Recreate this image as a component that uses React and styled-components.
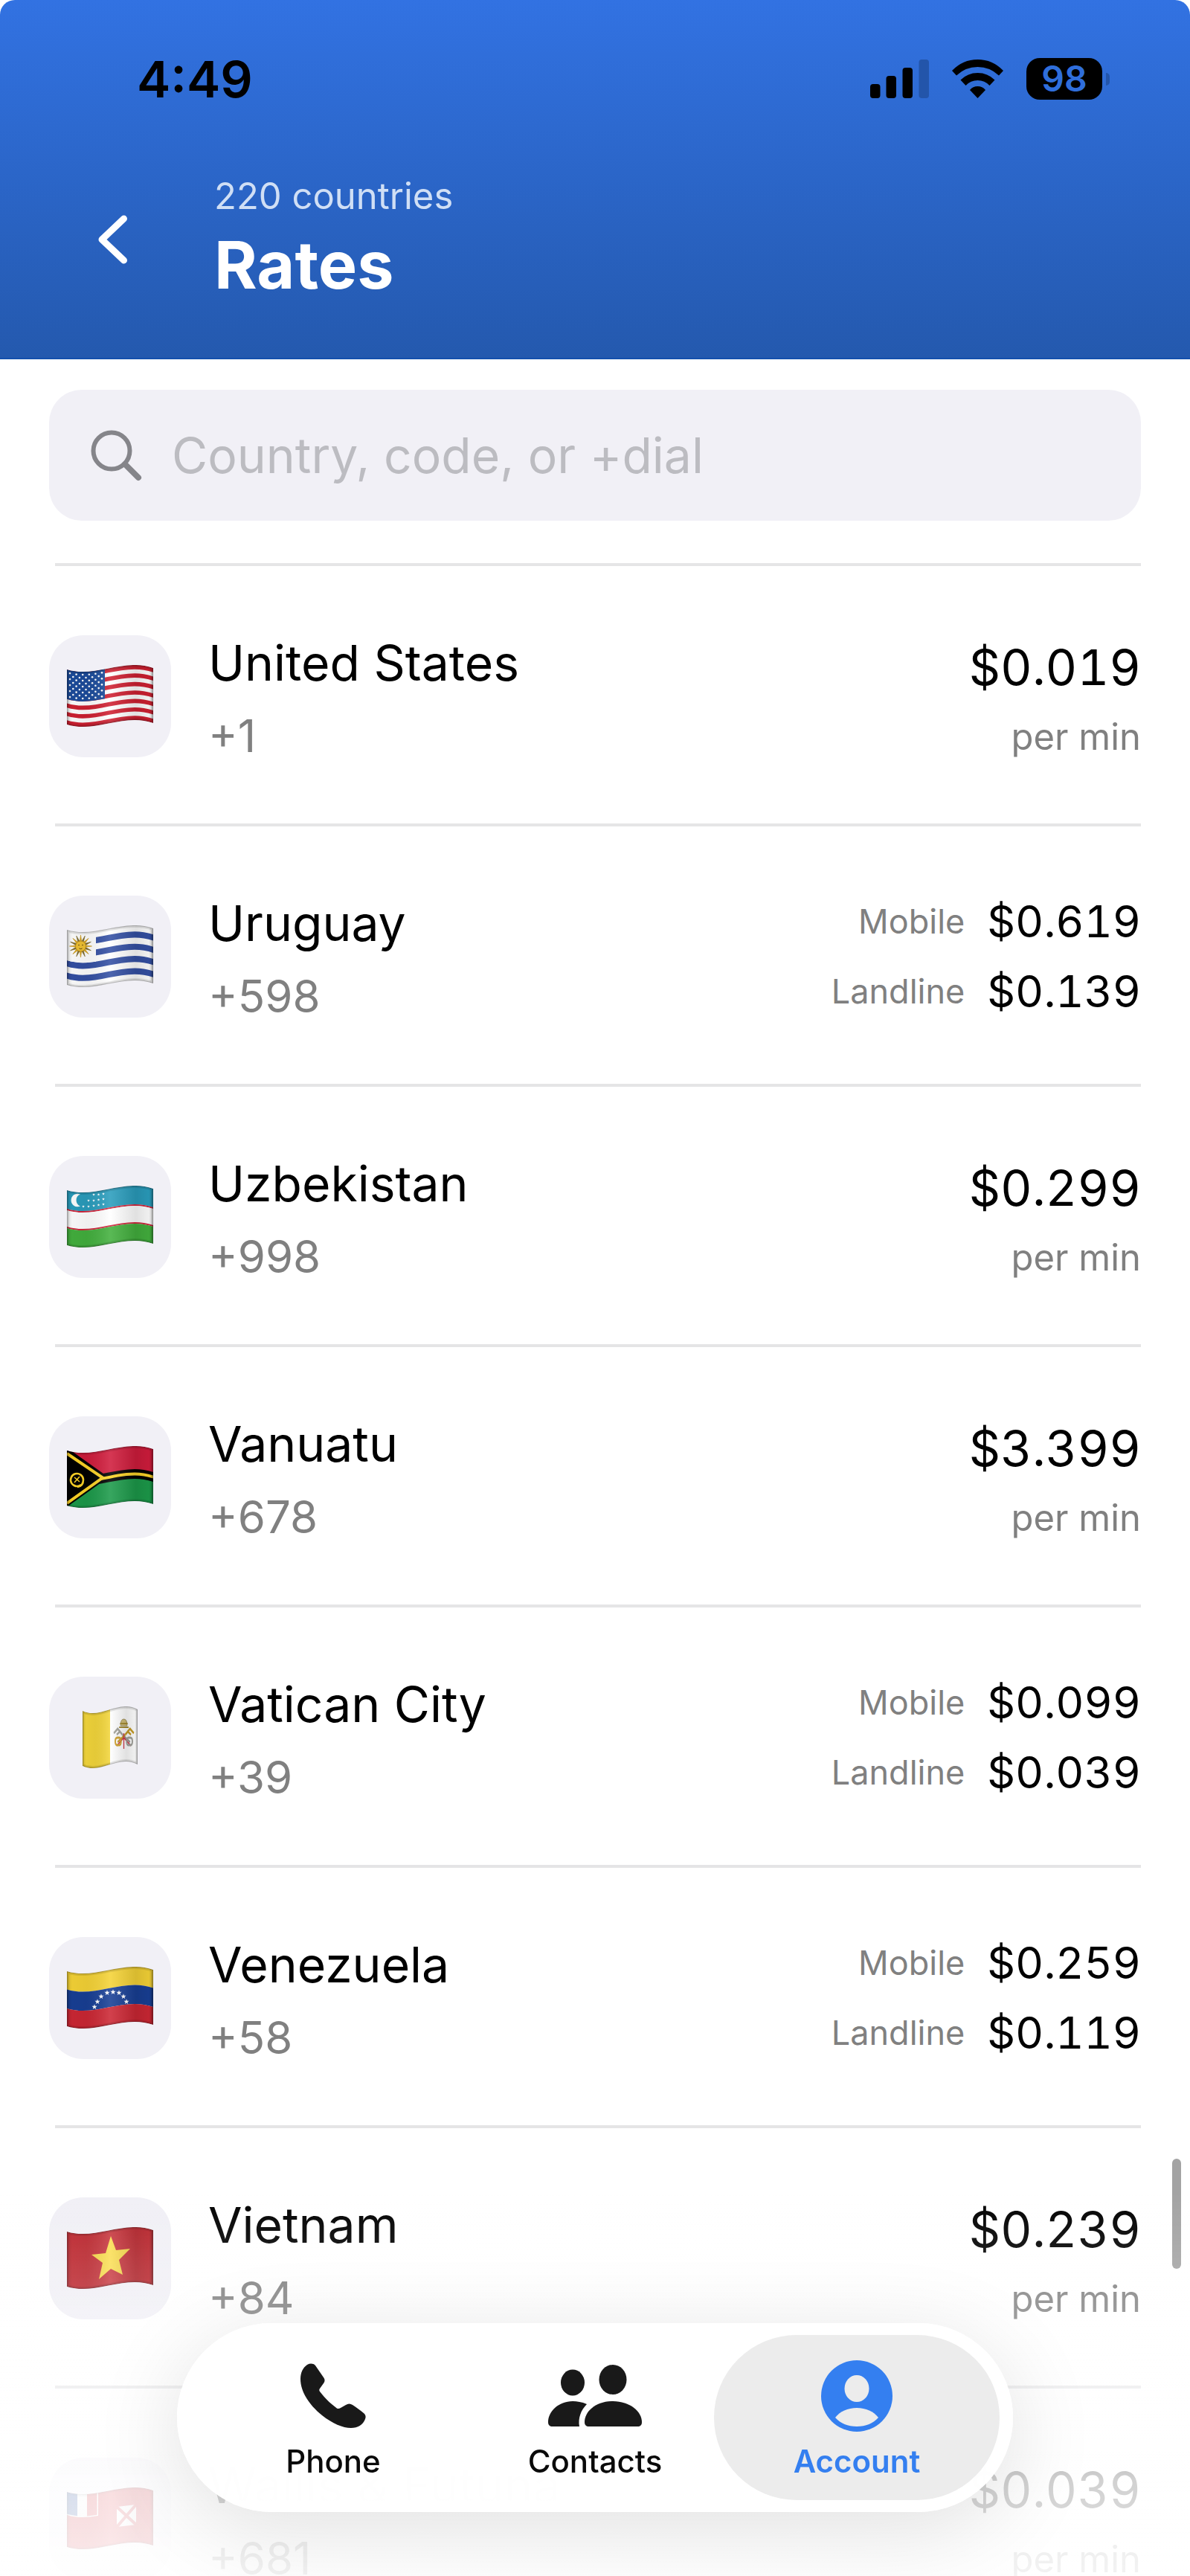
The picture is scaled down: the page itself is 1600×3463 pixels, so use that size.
import React, { useState } from 'react';
import styled, { createGlobalStyle, css } from 'styled-components';

const GlobalStyle = createGlobalStyle`
  * {
    box-sizing: border-box;
  }

  body {
    margin: 0;
    background: #fff;
    color: #000;
    font-family: Inter, 'Liberation Sans', sans-serif;
  }
`;

const Screen = styled.div`
  position: relative;
  display: flex;
  flex-direction: column;
  height: 100vh;
  overflow: hidden;
`;

const Header = styled.header`
  flex: none;
  border-radius: 20px 20px 0 0;
  border-bottom: 2px solid #1450ad;
  background: linear-gradient(#3272e2, #2459ae);
`;

const StatusBar = styled.div`
  display: flex;
  align-items: center;
  justify-content: space-between;
  padding: 66px 118px 0 184px;
`;

const Clock = styled.time`
  font-size: 68px;
  line-height: 80px;
  font-weight: 600;
`;

const StatusIcons = styled.div`
  display: flex;
  align-items: center;
  gap: 31px;
`;

const Battery = styled.div`
  position: relative;
  width: 102px;
  height: 56px;
  border-radius: 18px;
  background: #000;
  color: #2f6edb;
  font-size: 48px;
  line-height: 56px;
  font-weight: 600;
  text-align: center;

  &::after {
    content: '';
    position: absolute;
    top: 20px;
    right: -10px;
    width: 5px;
    height: 17px;
    border-radius: 0 5px 5px 0;
    background: #2355aa;
  }
`;

const TitleBar = styled.div`
  display: flex;
  align-items: center;
  gap: 116px;
  padding: 84px 66px 67px 132px;
`;

const BackButton = styled.button`
  display: flex;
  padding: 0;
  border: 0;
  background: none;
  color: #fff;
  cursor: pointer;
`;

const Subtitle = styled.p`
  margin: 0;
  color: #d0dff5;
  font-size: 49px;
  line-height: 68px;
`;

const Title = styled.h1`
  margin: 0;
  color: #fff;
  font-size: 88px;
  line-height: 116px;
  font-weight: 700;
`;

const SearchField = styled.label`
  display: flex;
  flex: none;
  align-items: center;
  gap: 40px;
  height: 176px;
  margin: 41px 66px 57px;
  padding: 0 56px;
  border-radius: 44px;
  background: #f1f0f6;
  color: #85858a;
`;

const SearchInput = styled.input`
  flex: 1;
  min-width: 0;
  padding: 0;
  border: 0;
  outline: 0;
  background: none;
  color: #000;
  font: inherit;
  font-size: 66px;

  &::placeholder {
    color: #bcbcc1;
    opacity: 1;
  }
`;

const RateList = styled.ul`
  flex: 1;
  min-height: 0;
  margin: 0;
  padding: 0 66px;
  overflow-y: auto;
  scrollbar-width: none;
  list-style: none;
`;

const RateRow = styled.li`
  display: flex;
  flex-direction: column;

  &::before {
    content: '';
    height: 4px;
    margin-left: 8px;
    background: #e5e5e6;
  }
`;

const RateBody = styled.div`
  display: flex;
  align-items: center;
  gap: 50px;
  height: 346px;
  padding-top: 4px;
`;

const FlagTile = styled.div`
  display: flex;
  flex: none;
  align-items: center;
  justify-content: center;
  width: 164px;
  height: 164px;
  border-radius: 46px;
  background: #f1f0f6;
`;

const Country = styled.div`
  flex: 1;
  min-width: 0;
  padding-top: 8px;
`;

const CountryName = styled.div`
  font-size: 66px;
  line-height: 98px;
`;

const DialCode = styled.div`
  color: #808080;
  font-size: 60px;
  line-height: 98px;
`;

const Prices = styled.div`
  display: flex;
  flex-direction: column;
  align-items: flex-end;
  padding-top: ${({ $flat }) => ($flat ? '16px' : '0')};
`;

const PriceLine = styled.div`
  display: flex;
  align-items: center;
  gap: 30px;
  line-height: 94px;
`;

const Price = styled.span`
  font-size: ${({ $small }) => ($small ? '59px' : '66px')};
  font-variant-numeric: tabular-nums;
`;

const PriceNote = styled.span`
  color: #808080;
  font-size: ${({ $small }) => ($small ? '45px' : '49px')};
`;

const ScrollThumb = styled.div`
  position: absolute;
  top: 2902px;
  right: 12px;
  width: 12px;
  height: 148px;
  border-radius: 6px;
  background: #a3a3a3;
`;

const BottomFade = styled.div`
  position: fixed;
  right: 0;
  bottom: 0;
  left: 0;
  height: 520px;
  background: linear-gradient(
    rgba(255, 255, 255, 0),
    rgba(255, 255, 255, 0.2) 30%,
    rgba(255, 255, 255, 0.45) 50%,
    rgba(255, 255, 255, 0.82) 75%,
    rgba(255, 255, 255, 0.9)
  );
  pointer-events: none;
`;

const TabBar = styled.nav`
  position: fixed;
  bottom: 86px;
  left: 50%;
  display: flex;
  padding: 16px 18px;
  border-radius: 127px;
  background: rgba(255, 255, 255, 0.98);
  box-shadow: 0 24px 120px rgba(0, 0, 0, 0.12);
  transform: translateX(-50%);
`;

const Tab = styled.button`
  display: flex;
  flex-direction: column;
  align-items: center;
  width: 384px;
  height: 222px;
  padding: 34px 0 0;
  border: 0;
  border-radius: 111px;
  background: none;
  color: #0a0a0a;
  font: inherit;
  font-size: 42px;
  line-height: 48px;
  font-weight: 500;
  cursor: pointer;

  & + & {
    margin-left: -32px;
  }

  svg {
    margin-bottom: 16px;
  }

  ${({ $active }) =>
    $active &&
    css`
      background: #ececec;
      color: #347ff0;
      font-weight: 600;
    `}
`;

// Height of the cloth's upper edge at a given x, for a flag 116 wide.
const waveY = (x) => {
  const t = x / 116;
  const u = 1 - t;
  return 6 * u ** 3 + 54 * u * u * t - 30 * u * t * t + 4 * t ** 3;
};

const band = (from, to) =>
  `M0 ${6 + from}C38 ${18 + from} 76 ${from - 10} 116 ${4 + from}V${4 + to}` +
  `C76 ${to - 10} 38 ${18 + to} 0 ${6 + to}Z`;

const starPoints = (cx, cy, r) =>
  Array.from({ length: 10 }, (_, i) => {
    const radius = i % 2 ? r * 0.4 : r;
    const angle = (Math.PI / 5) * i - Math.PI / 2;
    return `${cx + radius * Math.cos(angle)},${cy + radius * Math.sin(angle)}`;
  }).join(' ');

const Flag = ({ id, narrow, children }) => (
  <svg
    width={narrow ? 74 : 116}
    height="84"
    viewBox="0 0 116 84"
    preserveAspectRatio="none"
    aria-hidden="true"
  >
    <defs>
      <clipPath id={`${id}-cloth`}>
        <path d={band(0, 74)} />
      </clipPath>
      <linearGradient id={`${id}-shade`}>
        <stop offset="0" stopColor="#000" stopOpacity="0.16" />
        <stop offset="0.06" stopColor="#000" stopOpacity="0.04" />
        <stop offset="0.22" stopColor="#000" stopOpacity="0.06" />
        <stop offset="0.5" stopColor="#fff" stopOpacity="0.12" />
        <stop offset="0.8" stopColor="#000" stopOpacity="0.12" />
        <stop offset="0.95" stopColor="#000" stopOpacity="0.06" />
        <stop offset="1" stopColor="#000" stopOpacity="0.24" />
      </linearGradient>
    </defs>
    <g clipPath={`url(#${id}-cloth)`}>
      {children}
      <path d={band(0, 74)} fill={`url(#${id}-shade)`} />
      <path d={band(0, 74)} fill="none" stroke="#000" strokeOpacity="0.1" strokeWidth="6" />
      <path d={band(0, 74)} fill="none" stroke="#000" strokeOpacity="0.2" strokeWidth="2" />
    </g>
  </svg>
);

const UnitedStatesFlag = () => {
  const stripe = 74 / 13;
  const stars = [];
  for (let row = 0; row < 9; row += 1) {
    for (let col = 0; col < (row % 2 ? 5 : 6); col += 1) {
      const x = 4 + col * 8.6 + (row % 2 ? 4.3 : 0);
      stars.push(<circle key={`${row}-${col}`} cx={x} cy={waveY(x) + 4 + row * 4} r="1.3" />);
    }
  }
  return (
    <Flag id="us">
      <path d={band(0, 74)} fill="#fff" />
      {[0, 2, 4, 6, 8, 10, 12].map((n) => (
        <path key={n} d={band(n * stripe, (n + 1) * stripe)} fill="#cf2031" />
      ))}
      <clipPath id="us-canton">
        <rect width="51" height="84" />
      </clipPath>
      <path d={band(0, 7 * stripe)} fill="#1c4c9c" clipPath="url(#us-canton)" />
      <g fill="#fff">{stars}</g>
    </Flag>
  );
};

const UruguayFlag = () => {
  const stripe = 74 / 9;
  return (
    <Flag id="uy">
      <path d={band(0, 74)} fill="#fff" />
      {[1, 3, 5, 7].map((n) => (
        <path key={n} d={band(n * stripe, (n + 1) * stripe)} fill="#3450a4" />
      ))}
      <clipPath id="uy-canton">
        <rect width="39" height="84" />
      </clipPath>
      <path d={band(0, 5 * stripe)} fill="#fff" clipPath="url(#uy-canton)" />
      {Array.from({ length: 16 }, (_, i) => (
        <path
          key={i}
          d="M17.2 22L18.5 13L19.8 22Z"
          fill={i % 2 ? '#7d6a2c' : '#e0ac1e'}
          stroke={i % 2 ? '#7d6a2c' : '#c4941b'}
          strokeWidth="0.6"
          transform={`rotate(${i * 22.5} 18.5 28)`}
        />
      ))}
      <circle cx="18.5" cy="28" r="7" fill="#f0c232" stroke="#b88a1c" strokeWidth="0.8" />
      <circle cx="16" cy="26.5" r="0.8" fill="#5c4710" />
      <circle cx="21" cy="26.5" r="0.8" fill="#5c4710" />
      <path d="M16.5 31q2 1.4 4 0" stroke="#5c4710" fill="none" />
    </Flag>
  );
};

const UzbekistanFlag = () => (
  <Flag id="uz">
    <path d={band(0, 25)} fill="#2a9dbd" />
    <path d={band(25, 27)} fill="#d2263c" />
    <path d={band(27, 49)} fill="#fff" />
    <path d={band(49, 51)} fill="#d2263c" />
    <path d={band(51, 74)} fill="#43b03e" />
    <path d="M18 11.5A8.8 8.8 0 1 0 18 27.5A8.6 8.6 0 0 1 18 11.5Z" fill="#fff" />
    <g fill="#fff">
      {[[36, 12], [42.5, 12], [49, 11], [29, 20], [36, 20], [42.5, 19], [49, 18], [22, 28], [29, 28], [36, 27], [42.5, 26], [49, 25]].map(
        ([x, y]) => (
          <polygon key={`${x}-${y}`} points={starPoints(x, y, 2)} />
        )
      )}
    </g>
  </Flag>
);

const VanuatuFlag = () => (
  <Flag id="vu">
    <path d={band(0, 37)} fill="#d01c3c" />
    <path d={band(37, 74)} fill="#1c9a4a" />
    <path d={band(31, 44)} fill="#000" />
    <path d="M-6 -2L56 42L-6 86Z" fill="#000" />
    <path d="M0 10L48 42.5L0 77" fill="none" stroke="#fcd327" strokeWidth="4" />
    <clipPath id="vu-fly">
      <rect x="47" width="69" height="84" />
    </clipPath>
    <path d={band(35.5, 39.5)} fill="#fcd327" clipPath="url(#vu-fly)" />
    <path
      d="M19 52A8.5 8.5 0 1 1 22 45Q22 54 14 55"
      fill="none"
      stroke="#fcd327"
      strokeWidth="2.6"
    />
    <path d="M10 49L17 41M10 42L17 48" stroke="#fcd327" strokeWidth="1.6" />
  </Flag>
);

const VaticanFlag = () => (
  <Flag id="va" narrow>
    <path d={band(0, 74)} fill="#fff" />
    <clipPath id="va-hoist">
      <rect width="58" height="84" />
    </clipPath>
    <path d={band(0, 74)} fill="#f3d63b" clipPath="url(#va-hoist)" />
    <path d="M80 26Q80 17 87 17Q94 17 94 26Z" fill="#d0bc75" stroke="#8e8152" />
    <path d="M79 23H95M77 28H97" stroke="#a48a31" strokeWidth="2" />
    <path d="M66 36L74 30L84 38M72 38L80 33" fill="none" stroke="#a3a39a" strokeWidth="3" />
    <path d="M108 36L100 30L90 38M102 38L94 33" fill="none" stroke="#c69c26" strokeWidth="3" />
    <path d="M84 38L100 48" stroke="#9b9b94" strokeWidth="3" />
    <path d="M90 38L74 48" stroke="#c69c26" strokeWidth="3" />
    <path d="M87 36V57M72 53L87 42L102 53" fill="none" stroke="#cf3346" strokeWidth="2" />
    <rect x="69" y="42" width="12" height="10" rx="4" fill="none" stroke="#cfa12b" strokeWidth="3" />
    <rect x="93" y="42" width="12" height="10" rx="4" fill="none" stroke="#a3a39d" strokeWidth="3" />
  </Flag>
);

const VenezuelaFlag = () => (
  <Flag id="ve">
    <path d={band(0, 24.5)} fill="#f5d336" />
    <path d={band(24.5, 50)} fill="#183f95" />
    <path d={band(50, 74)} fill="#cc2734" />
    <g fill="#fff">
      {[[37, 54], [41, 47], [46, 40], [54, 35], [62, 34], [70, 35], [76, 40], [80, 47]].map(([x, y]) => (
        <polygon key={x} points={starPoints(x, y, 3.8)} />
      ))}
    </g>
  </Flag>
);

const VietnamFlag = () => (
  <Flag id="vn">
    <path d={band(0, 74)} fill="#c3252d" />
    <polygon
      points="59,12 66,31 85,29 70,44 75,64 59,56 43,70 48,48 33,37 52,35"
      fill="#fbdb41"
    />
  </Flag>
);

const WallisFlag = () => (
  <Flag id="wf">
    <path d={band(0, 74)} fill="#d8303c" />
    <clipPath id="wf-canton">
      <rect width="42" height="84" />
    </clipPath>
    <path d={band(0, 31)} fill="#fff" clipPath="url(#wf-canton)" />
    <clipPath id="wf-blue">
      <rect width="14" height="84" />
    </clipPath>
    <path d={band(0, 29.5)} fill="#234a9c" clipPath="url(#wf-blue)" />
    <clipPath id="wf-red">
      <rect x="27" width="13.5" height="84" />
    </clipPath>
    <path d={band(0, 29.5)} fill="#d8303c" clipPath="url(#wf-red)" />
    <path d="M67 26L93 23V50L67 53Z" fill="#fff" />
    <path d="M67 26L93 50M93 23L67 53" stroke="#d8303c" strokeWidth="4" />
  </Flag>
);

const SignalIcon = () => (
  <svg width="79" height="52" viewBox="0 0 79 52" aria-hidden="true">
    <rect y="33" width="13.5" height="19" rx="4" />
    <rect x="21.5" y="22" width="13.5" height="30" rx="4" />
    <rect x="43.5" y="11" width="13.5" height="41" rx="4" />
    <rect x="65.5" width="13.5" height="52" rx="4" fill="#2355aa" />
  </svg>
);

const WifiIcon = () => (
  <svg width="69" height="52" viewBox="0 0 69 52" aria-hidden="true">
    <path d="M0 15Q14.5 0 34.5 0T69 15L63 21.5Q51 10 34.5 10T6 21.5Z" />
    <path d="M11.5 27.5Q21 18 34.5 18T57.5 27.5L50.5 35Q44 28 34.5 28T18.5 35Z" />
    <path d="M24 41Q28 36 34.5 36T45 41L34.5 52Z" />
  </svg>
);

const BackIcon = () => (
  <svg width="40" height="66" viewBox="0 0 40 66" fill="none" aria-hidden="true">
    <path
      d="M34.500 5L5 33L34.500 61"
      stroke="currentColor"
      strokeWidth="9"
      strokeLinecap="round"
      strokeLinejoin="round"
    />
  </svg>
);

const SearchIcon = () => (
  <svg width="69" height="69" viewBox="0 0 69 69" fill="none" aria-hidden="true">
    <circle cx="28" cy="28" r="24.5" stroke="currentColor" strokeWidth="6" />
    <path d="M46 46L64 64" stroke="currentColor" strokeWidth="8" strokeLinecap="round" />
  </svg>
);

const PhoneIcon = () => (
  <svg width="88" height="96" viewBox="0 0 88 96" fill="#191919" aria-hidden="true">
    <path d="M9 6C3 10 0 17 0 25C0 44 14 62 29 74C43 85 57 91 68 91C77 91 84 87 87 79C88 76 88 74 85 71C80 67 75 63 70 60C67 58 64 58 61 60L54 64C51 66 49 65 47 63C39 57 32 50 26 42C25 41 25 39 26 38L31 31C33 28 33 26 31 23L20 7C17 4 13 4 9 6Z" />
  </svg>
);

const ContactsIcon = () => (
  <svg width="128" height="96" viewBox="0 0 128 96" fill="#191919" aria-hidden="true">
    <ellipse cx="34" cy="30" rx="16" ry="17.5" />
    <ellipse cx="88" cy="26" rx="18.5" ry="20" />
    <path d="M53 59C46 56 40 55 34 55C15 55 1 69 1 83C1 87 3 89 7 89H43C41 78 45 67 53 59Z" />
    <path d="M88 55C65 55 50 69 50 83C50 87 52 89 56 89H121C125 89 127 87 127 83C127 69 111 55 88 55Z" />
  </svg>
);

const AccountIcon = () => (
  <svg width="96" height="96" viewBox="0 0 96 96" aria-hidden="true">
    <circle cx="48" cy="48" r="48" fill="currentColor" />
    <ellipse cx="48" cy="38" rx="16.5" ry="18" fill="#ececec" />
    <path d="M19 77C25 69 36 64 48 64S71 69 77 77C70 85 60 89 48 89S26 85 19 77Z" fill="#ececec" />
  </svg>
);

const rates = [
  { name: 'United States', code: '+1', flag: UnitedStatesFlag, flat: '$0.019' },
  { name: 'Uruguay', code: '+598', flag: UruguayFlag, mobile: '$0.619', landline: '$0.139' },
  { name: 'Uzbekistan', code: '+998', flag: UzbekistanFlag, flat: '$0.299' },
  { name: 'Vanuatu', code: '+678', flag: VanuatuFlag, flat: '$3.399' },
  { name: 'Vatican City', code: '+39', flag: VaticanFlag, mobile: '$0.099', landline: '$0.039' },
  { name: 'Venezuela', code: '+58', flag: VenezuelaFlag, mobile: '$0.259', landline: '$0.119' },
  { name: 'Vietnam', code: '+84', flag: VietnamFlag, flat: '$0.239' },
  { name: 'Wallis & Futuna', code: '+681', flag: WallisFlag, flat: '$0.039' },
];

const tabs = [
  { label: 'Phone', icon: PhoneIcon },
  { label: 'Contacts', icon: ContactsIcon },
  { label: 'Account', icon: AccountIcon },
];

const Rate = ({ rate }) => {
  const FlagIcon = rate.flag;
  return (
    <RateRow>
      <RateBody>
        <FlagTile>
          <FlagIcon />
        </FlagTile>
        <Country>
          <CountryName>{rate.name}</CountryName>
          <DialCode>{rate.code}</DialCode>
        </Country>
        {rate.flat ? (
          <Prices $flat>
            <PriceLine>
              <Price>{rate.flat}</Price>
            </PriceLine>
            <PriceLine>
              <PriceNote>per min</PriceNote>
            </PriceLine>
          </Prices>
        ) : (
          <Prices>
            <PriceLine>
              <PriceNote $small>Mobile</PriceNote>
              <Price $small>{rate.mobile}</Price>
            </PriceLine>
            <PriceLine>
              <PriceNote $small>Landline</PriceNote>
              <Price $small>{rate.landline}</Price>
            </PriceLine>
          </Prices>
        )}
      </RateBody>
    </RateRow>
  );
};

const App = () => {
  const [query, setQuery] = useState('');
  const [activeTab, setActiveTab] = useState('Account');

  const term = query.trim().toLowerCase();
  const visible = rates.filter(
    (rate) => rate.name.toLowerCase().includes(term) || rate.code.includes(term)
  );

  return (
    <Screen>
      <GlobalStyle />
      <Header>
        <StatusBar>
          <Clock>4:49</Clock>
          <StatusIcons>
            <SignalIcon />
            <WifiIcon />
            <Battery>98</Battery>
          </StatusIcons>
        </StatusBar>
        <TitleBar>
          <BackButton type="button" aria-label="Back">
            <BackIcon />
          </BackButton>
          <div>
            <Subtitle>220 countries</Subtitle>
            <Title>Rates</Title>
          </div>
        </TitleBar>
      </Header>
      <SearchField>
        <SearchIcon />
        <SearchInput
          type="text"
          aria-label="Search rates"
          placeholder="Country, code, or +dial"
          value={query}
          onChange={(event) => setQuery(event.target.value)}
        />
      </SearchField>
      <RateList>
        {visible.map((rate) => (
          <Rate key={rate.name} rate={rate} />
        ))}
      </RateList>
      <ScrollThumb />
      <BottomFade />
      <TabBar>
        {tabs.map(({ label, icon: Icon }) => (
          <Tab
            key={label}
            type="button"
            $active={label === activeTab}
            onClick={() => setActiveTab(label)}
          >
            <Icon />
            {label}
          </Tab>
        ))}
      </TabBar>
    </Screen>
  );
};

export default App;
